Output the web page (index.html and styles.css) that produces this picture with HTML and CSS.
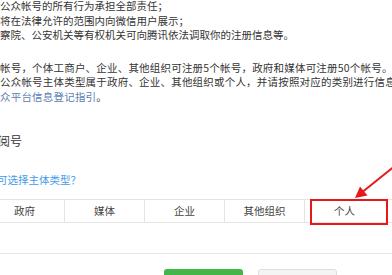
FILE: index.html
```html
<!doctype html>
<html lang="zh-CN">
<head>
    <meta charset="UTF-8">
    <title>选择主体类型</title>
    <link rel="stylesheet" href="styles.css">
</head>
<body>
    <div class="page">
        <div class="terms">
            <div class="line">公众帐号的所有行为承担全部责任；</div>
            <div class="line">将在法律允许的范围内向微信用户展示；</div>
            <div class="line">察院、公安机关等有权机关可向腾讯依法调取你的注册信息等。</div>
        </div>
        <div class="limits">
            <div class="line">帐号，个体工商户、企业、其他组织可注册5个帐号，政府和媒体可注册50个帐号。</div>
            <div class="line">公众帐号主体类型属于政府、企业、其他组织或个人，并请按照对应的类别进行信息登记。</div>
            <div class="line"><a class="link" href="#">众平台信息登记指引</a>。</div>
        </div>
        <div class="account">阅号</div>
        <a class="help" href="#">可选择主体类型？</a>
        <div class="types">
            <span class="type">政府</span>
            <span class="type">媒体</span>
            <span class="type">企业</span>
            <span class="type">其他组织</span>
            <span class="type last">个人<i class="mark"></i></span>
        </div>
        <div class="footer">
            <span class="btn btn-ok"></span>
            <span class="btn btn-cancel"></span>
        </div>
        <svg class="arrow" width="44" height="44" viewBox="0 0 44 44">
            <line x1="46" y1="5" x2="13" y2="31.5" stroke="#e8181a" stroke-width="2"/>
            <polygon points="5,38 17.5,35.5 10,26.5" fill="#e8181a"/>
        </svg>
    </div>
</body>
</html>
```

FILE: styles.css
```css
*{padding: 0;margin: 0}
body{
    background: #fff;
    font-family: "Noto Sans CJK SC", "Microsoft YaHei", sans-serif;
    color: #353535;
    text-spacing-trim: space-all;
}
.page{
    position: relative;
    width: 392px;
    height: 275px;
    overflow: hidden;
}
.line{
    white-space: nowrap;
    font-size: 10.5px;
}
.terms{
    margin-top: -1px;
    line-height: 14.5px;
}
.limits{
    margin-top: 18px;
    line-height: 14.75px;
    letter-spacing: 0.2px;
}
.link{
    color: #5b7db0;
    text-decoration: none;
}
.account{
    margin-top: 28px;
    font-size: 12px;
    line-height: 16px;
    margin-left: -2px;
}
.help{
    display: block;
    margin-top: 24px;
    font-size: 10.5px;
    line-height: 14px;
    color: #459ae9;
    text-decoration: none;
    margin-left: -3px;
}
.types{
    display: flex;
    margin-top: 12px;
    margin-left: -15px;
    border-top: 1px solid #e4e4e4;
    border-bottom: 1px solid #e4e4e4;
}
.types .type{
    flex: none;
    width: 79px;
    height: 22px;
    line-height: 22px;
    text-align: center;
    font-size: 10.5px;
    color: #444;
    border-right: 1px solid #e4e4e4;
}
.types .type.last{
    position: relative;
    border-right: none;
}
.mark{
    position: absolute;
    top: -1px;
    left: 5px;
    width: 78px;
    height: 26px;
    box-sizing: border-box;
    border: 2.5px solid #e8181a;
}
.footer{
    margin-top: 30px;
    border-top: 1px solid #e6e6e6;
    padding-top: 15px;
    padding-left: 164px;
    display: flex;
    gap: 15px;
}
.btn{
    display: block;
    width: 79px;
    height: 30px;
    box-sizing: border-box;
    border-radius: 3px;
}
.btn-ok{
    background: #44b549;
}
.btn-cancel{
    background: #f4f4f4;
    border: 1px solid #dedede;
}
.arrow{
    position: absolute;
    left: 350px;
    top: 160px;
}
```
